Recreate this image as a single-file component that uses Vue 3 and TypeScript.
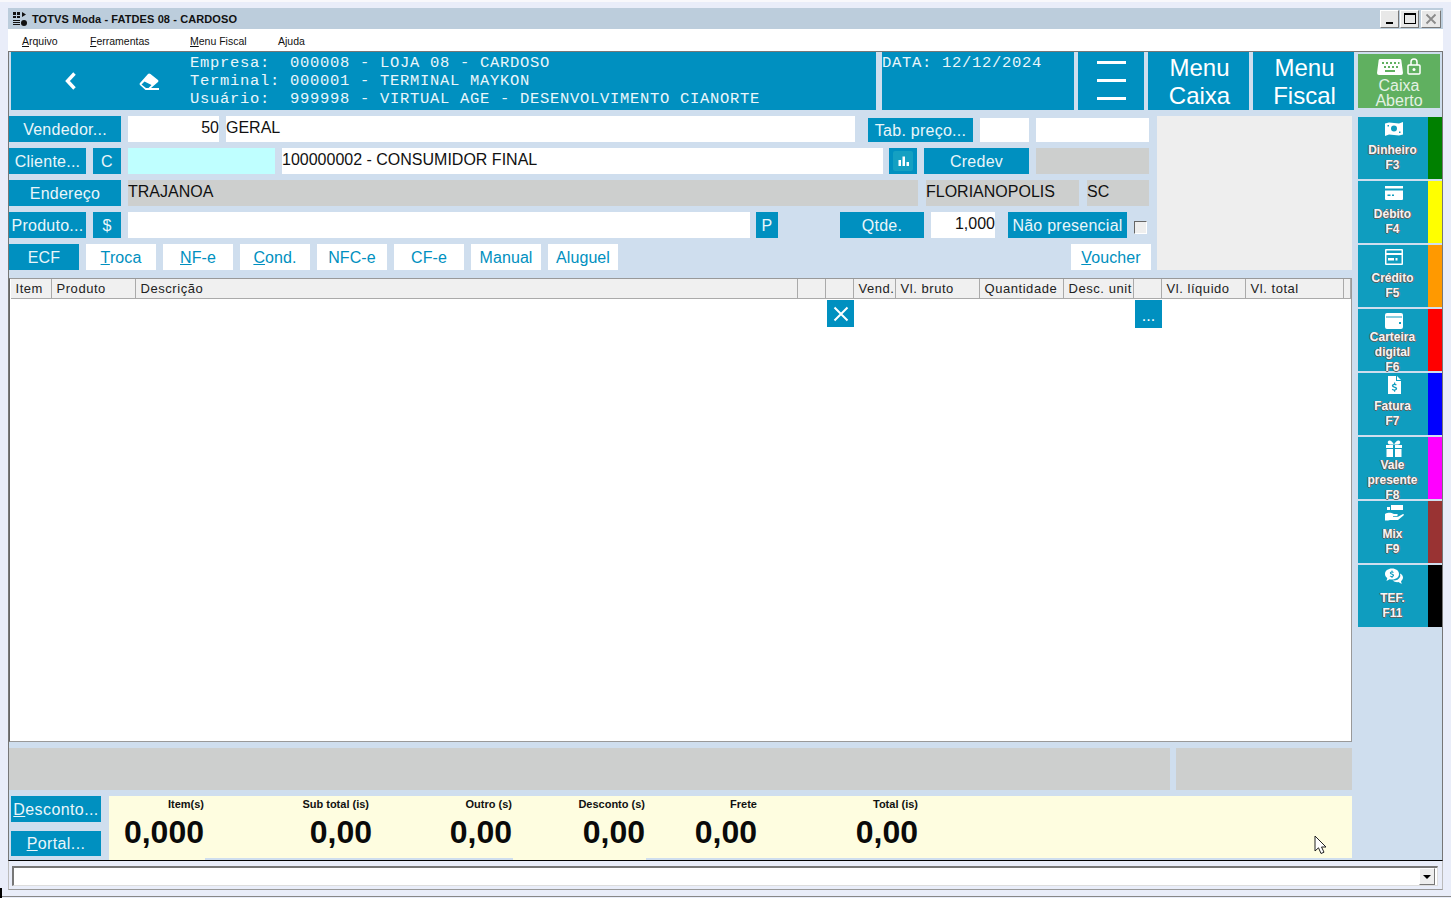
<script setup lang="ts">
interface Field { text?: string; kind: string; w: number; ml?: number; ul?: string; rest?: string; align?: string; short?: boolean; }
const rows: Field[][] = [
  [
    { text: 'Vendedor...', kind: 'btn', w: 112 },
    { text: '50', kind: 'input', w: 91, ml: 7, align: 'right' },
    { text: 'GERAL', kind: 'input', w: 629, ml: 7 },
    { text: 'Tab. preço...', kind: 'btn', w: 105, ml: 13, short: true },
    { kind: 'input', w: 49, ml: 7, short: true },
    { kind: 'input', w: 113, ml: 7, short: true },
  ],
  [
    { text: 'Cliente...', kind: 'btn', w: 77 },
    { text: 'C', kind: 'btn', w: 28, ml: 7 },
    { kind: 'cyan', w: 147, ml: 7 },
    { text: '100000002 - CONSUMIDOR FINAL', kind: 'input', w: 601, ml: 7 },
    { kind: 'chart', w: 28, ml: 6 },
    { text: 'Credev', kind: 'btn', w: 105, ml: 7 },
    { kind: 'gray', w: 113, ml: 7 },
  ],
  [
    { text: 'Endereço', kind: 'btn', w: 112 },
    { text: 'TRAJANOA', kind: 'gray', w: 790, ml: 7 },
    { text: 'FLORIANOPOLIS', kind: 'gray', w: 153, ml: 8 },
    { text: 'SC', kind: 'gray', w: 62, ml: 8 },
  ],
  [
    { text: 'Produto...', kind: 'btn', w: 77 },
    { text: '$', kind: 'btn', w: 28, ml: 7 },
    { kind: 'input', w: 622, ml: 7 },
    { text: 'P', kind: 'btn', w: 22, ml: 6 },
    { text: 'Qtde.', kind: 'btn', w: 84, ml: 62 },
    { text: '1,000', kind: 'input', w: 64, ml: 7, align: 'right' },
    { text: 'Não presencial', kind: 'btn', w: 119, ml: 13 },
    { kind: 'check', w: 13, ml: 7 },
  ],
  [
    { text: 'ECF', kind: 'btn', w: 70 },
    { ul: 'T', rest: 'roca', kind: 'tab', w: 70, ml: 7 },
    { ul: 'N', rest: 'F-e', kind: 'tab', w: 70, ml: 7 },
    { ul: 'C', rest: 'ond.', kind: 'tab', w: 70, ml: 7 },
    { text: 'NFC-e', kind: 'tab', w: 70, ml: 7 },
    { text: 'CF-e', kind: 'tab', w: 70, ml: 7 },
    { text: 'Manual', kind: 'tab', w: 70, ml: 7 },
    { text: 'Aluguel', kind: 'tab', w: 70, ml: 7 },
    { ul: 'V', rest: 'oucher', kind: 'tab', w: 80, ml: 453 },
  ],
];

const columns = [
  { t: 'Item', w: 41 }, { t: 'Produto', w: 84 }, { t: 'Descrição', w: 662 }, { t: '', w: 28 },
  { t: '', w: 28 }, { t: 'Vend.', w: 42 }, { t: 'Vl. bruto', w: 84 }, { t: 'Quantidade', w: 84 },
  { t: 'Desc. unit', w: 70 }, { t: '', w: 28 }, { t: 'Vl. líquido', w: 84 }, { t: 'Vl. total', w: 98 }, { t: '', w: 7 },
];
const gridCols = columns.map((c) => c.w + 'px').join(' ');

const sideButtons = [
  { lines: ['Dinheiro', 'F3'], color: '#008000', d: 'M1 4.500 5 3.500 15 4.500 19 3v12.500l-4 1-10-1-4 1.500zM10 6.600a3 3 0 1 0 0 6 3 3 0 0 0 0-6zM3.500 6v1.500H5V6zM15 12.500V14h1.500v-1.500z' },
  { lines: ['Débito', 'F4'], color: '#ffff00', d: 'M1 3h18v2.500H1zM1 7.500h18V16a1 1 0 0 1-1 1H2a1 1 0 0 1-1-1zM3.500 11.500V13h3v-1.500zM8 11.500V13h2v-1.500z' },
  { lines: ['Crédito', 'F5'], color: '#ff9900', d: 'M2 2h16a1 1 0 0 1 1 1v14a1 1 0 0 1-1 1H2a1 1 0 0 1-1-1V3a1 1 0 0 1 1-1zM2.500 3.500v2.500h15V3.500zM2.500 8v8.500h15V8zM4 11h6v2.500H4zM11.500 11h2v2.500h-2z' },
  { lines: ['Carteira', 'digital', 'F6'], color: '#ff0000', d: 'M3 2h14a2 2 0 0 1 2 2v12a2 2 0 0 1-2 2H3a2 2 0 0 1-2-2V4a2 2 0 0 1 2-2zM2 5.500V6.500h16V5.500zM15 11v2h2v-2z' },
  { lines: ['Fatura', 'F7'], color: '#0000ff', d: 'M4 1h8v5h5v13H4zM13 1l4 4h-4zM10 7.500v1.200q-2.200.3-2.200 2 0 1.600 2.900 2.200 1 .3 1 .8 0 .8-1.300.8-1.200 0-2-.7l-.6 1q.8.7 2.200.9v1.100h1.200v-1.200q2-.4 2-2 0-1.600-2.800-2.200-1.100-.3-1.100-.8 0-.7 1.100-.7 1 0 1.700.5l.6-1q-.7-.5-1.500-.7V7.500z' },
  { lines: ['Vale', 'presente', 'F8'], color: '#ff00ff', d: 'M2 6h7v3H2zM11 6h7v3h-7zM2.500 10H9v8H2.500zM11 10h6.500v8H11zM10 5.500C8 2 6.500 1 5 1.500 3 2.300 3.500 5.500 6 5.500zM10 5.500c2-3.500 3.500-4.500 5-4 2 .8 1.500 4-1 4z' },
  { lines: ['Mix', 'F9'], color: '#993333', d: 'M7 2h12v5H7zM1 11c4-2 6-1 9 0h3c1 0 1 1.500 0 2H9v.7h5l5-2.700c1-.3 1 .8.500 1.500L14 17H6l-2 .5H1zM3 4h3v3H3z' },
  { lines: ['TEF.', 'F11'], color: '#000000', d: 'M8 1.500c4 0 7 2.300 7 5.500s-3 5.500-7 5.500q-1.300 0-2.300-.3L2.500 14l.8-3C1.800 10 1 8.600 1 7c0-3.200 3-5.500 7-5.500zM16 6.500c2 1 3 2.500 3 4 0 1.500-.8 2.800-2 3.600l.7 3-3.300-2q-3.500.4-5.900-1.600 5.500.5 7.500-3.500.5-1 0-3.500zM7.500 3.500v1q-1.700.2-1.700 1.500 0 1.200 2.200 1.700.8.200.8.600 0 .6-1 .6t-1.600-.5l-.5.800q.6.500 1.800.7v1h1v-1q1.600-.3 1.600-1.600 0-1.200-2.200-1.700-.900-.2-.900-.6 0-.500.900-.500.8 0 1.300.4l.5-.8q-.5-.400-1.200-.500v-1z' },
];

const totals = [
  { label: 'Item(s)', value: '0,000', w: 95 },
  { label: 'Sub total (is)', value: '0,00', w: 168, inset: true },
  { label: 'Outro (s)', value: '0,00', w: 140 },
  { label: 'Desconto (s)', value: '0,00', w: 133 },
  { label: 'Frete', value: '0,00', w: 112 },
  { label: 'Total (is)', value: '0,00', w: 161 },
];
const totalCols = totals.map((c) => c.w + 'px').join(' ');
</script>

<template>
  <div class="screen">
    <div class="titlebar">
      <svg class="appicon" width="16" height="16" viewBox="0 0 16 16">
        <path d="M1 1h3v3H1zM5 1h3v3H5zM10 1l4 2.500L10 6zM1 5h3v2H1zM5 5h3v2H5zM1 9h7v1H1zM1 11h7v1H1zM1 13h7v1H1z" fill="#111" />
        <circle cx="12" cy="12" r="3" fill="#111" />
      </svg>
      <span class="title">TOTVS Moda - FATDES 08 - CARDOSO</span>
      <div class="winbtns">
        <div class="winbtn"><i class="min"></i></div>
        <div class="winbtn"><i class="max"></i></div>
        <div class="winbtn close">
          <svg width="12" height="12" viewBox="0 0 12 12"><path d="M1.500 1.500l9 9M10.500 1.500l-9 9" stroke="#8a8a8a" stroke-width="1.800" /></svg>
        </div>
      </div>
    </div>
    <div class="menubar">
      <span class="m1"><u>A</u>rquivo</span>
      <span class="m2"><u>F</u>erramentas</span>
      <span class="m3"><u>M</u>enu Fiscal</span>
      <span class="m4">A<u>j</u>uda</span>
    </div>

    <div class="main">
      <header class="header">
        <div class="infobar">
          <div class="navicon back">
            <svg width="14" height="20" viewBox="0 0 14 20"><path d="M10.500 2.500 3.500 10l7 7.500" fill="none" stroke="#fff" stroke-width="3.400" /></svg>
          </div>
          <div class="navicon eraser">
            <svg width="21" height="19" viewBox="0 0 21 19"><path fill="#fff" fill-rule="evenodd" d="M9 2Q10 1 11.500 2L19 8Q20 9 19 10L12 16H20V18H6.500L1 13Q0 12 1 11ZM5.500 9.500 2.500 12.500 7 16H9.500L12.500 13Z" /></svg>
          </div>
          <pre class="info">Empresa:  000008 - LOJA 08 - CARDOSO
Terminal: 000001 - TERMINAL MAYKON
Usuário:  999998 - VIRTUAL AGE - DESENVOLVIMENTO CIANORTE</pre>
        </div>
        <div class="datebar">DATA: 12/12/2024</div>
        <div class="hamburger"><i></i><i></i><i></i></div>
        <div class="bigbtn caixa">Menu<br />Caixa</div>
        <div class="bigbtn fiscal">Menu<br />Fiscal</div>
        <div class="green">
          <div class="greenicons">
            <svg width="26" height="16" viewBox="0 0 26 16">
              <path fill="#fff" fill-rule="evenodd" d="M3 0h20q1 0 1.300 1L26 14q0 2-2 2H2q-2 0-2-2L1.700 1Q2 0 3 0zM5 3v2h2V3zM9 3v2h2V3zM13 3v2h2V3zM17 3v2h2V3zM21 3v2h1.500V3zM7 7v2h2V7zM11 7v2h2V7zM15 7v2h2V7zM19 7v2h2V7zM8 11v2h10v-2z" />
            </svg>
            <svg width="14" height="17" viewBox="0 0 14 17">
              <path fill="none" stroke="#fff" stroke-width="1.500" d="M4 7V4a3 3 0 0 1 6 0v3M2 7h10a1 1 0 0 1 1 1v7a1 1 0 0 1-1 1H2a1 1 0 0 1-1-1V8a1 1 0 0 1 1-1z" />
              <circle cx="7" cy="11.500" r="1.500" fill="#fff" />
            </svg>
          </div>
          <div class="greentext">Caixa<br />Aberto</div>
        </div>
      </header>

      <div class="content">
        <div class="left">
          <div class="formarea">
            <div class="rows">
              <div v-for="(row, i) in rows" :key="i" class="row">
                <div
                  v-for="(f, j) in row"
                  :key="j"
                  class="field"
                  :class="[f.kind, { short: f.short, right: f.align === 'right' }]"
                  :style="{ width: f.w + 'px', marginLeft: (f.ml ?? 0) + 'px' }"
                >
                  <svg v-if="f.kind === 'chart'" class="charticon" width="22" height="22" viewBox="0 0 22 22">
                    <rect x="1" y="1" width="20" height="20" rx="2" fill="#14a0c2" />
                    <path d="M6.500 10h2.500v6H6.500zM10.500 6.500H13V16h-2.500zM14.500 12H17v4h-2.500z" fill="#fff" />
                  </svg>
                  <template v-else-if="f.ul"><u>{{ f.ul }}</u>{{ f.rest }}</template>
                  <template v-else>{{ f.text }}</template>
                </div>
              </div>
            </div>
            <div class="sidepanel"></div>
          </div>

          <div class="table">
            <div class="thead" :style="{ gridTemplateColumns: gridCols }">
              <div v-for="(c, i) in columns" :key="i" class="th">{{ c.t }}</div>
            </div>
            <div class="tbody" :style="{ gridTemplateColumns: gridCols }">
              <button class="cellbtn xbtn">
                <svg width="16" height="16" viewBox="0 0 16 16"><path d="M1.500 1.500l13 13M14.500 1.500l-13 13" stroke="#fff" stroke-width="2" /></svg>
              </button>
              <button class="cellbtn dots">...</button>
            </div>
          </div>

          <div class="strip">
            <div class="strip-a"></div>
            <div class="strip-b"></div>
          </div>

          <div class="bottom">
            <div class="bottombtns">
              <div class="field btn b1"><u>D</u>esconto...</div>
              <div class="field btn b2"><u>P</u>ortal...</div>
            </div>
            <div class="ycol">
              <div class="ybody" :style="{ gridTemplateColumns: totalCols }">
                <div v-for="t in totals" :key="t.label" class="total">
                  <div class="tlabel" :class="{ inset: t.inset }">{{ t.label }}</div>
                  <div class="tvalue">{{ t.value }}</div>
                </div>
              </div>
              <div class="ytabs"><i class="y1"></i><i class="y2"></i></div>
            </div>
          </div>
        </div>

        <aside class="side">
          <div v-for="s in sideButtons" :key="s.lines[0]" class="sidebtn">
            <div class="sidemain">
              <svg class="sideicon" width="20" height="20" viewBox="0 0 20 20"><path :d="s.d" fill="#fff" fill-rule="evenodd" /></svg>
              <div class="sidetext"><div v-for="l in s.lines" :key="l">{{ l }}</div></div>
            </div>
            <div class="sidecolor" :style="{ background: s.color }"></div>
          </div>
        </aside>
      </div>
    </div>

    <div class="status">
      <div class="combo">
        <div class="combobtn"><i></i></div>
      </div>
    </div>

    <svg class="cursor" width="14" height="20" viewBox="0 0 14 20">
      <path d="M1 1v15l3.500-3.200L7 18.500l3-1.300-2.500-5.200H12z" fill="#fff" stroke="#222" stroke-width="1" />
    </svg>
    <div class="corner"></div>
    <div class="outerline"></div>
  </div>
</template>

<style>
html, body { margin: 0; background: #e9edf9; }
</style>

<style scoped>
.screen {
  position: relative;
  width: 1451px;
  height: 898px;
  box-sizing: border-box;
  padding: 8px 8px 0;
  overflow: hidden;
  background: #e9edf9;
  font-family: "Liberation Sans", Arial, sans-serif;
  color: #000;
  box-shadow: inset 0 2px #f8f8fb;
}
.titlebar {
  height: 21px;
  background: #bccddc;
  display: flex;
  align-items: center;
  position: relative;
  width: 1435px;
}
.appicon { margin: 0 0 0 4px; }
.title {
  margin-left: 4px;
  font-size: 11px;
  font-weight: 700;
  letter-spacing: 0.1px;
  color: #111;
}
.winbtns { margin-left: auto; margin-right: 2px; display: flex; gap: 1px; }
.winbtn {
  width: 19px;
  height: 18px;
  box-sizing: border-box;
  background: #e8e8e8;
  border: 1px solid;
  border-color: #fff #777 #777 #fff;
  position: relative;
  display: flex;
  align-items: center;
  justify-content: center;
}
.winbtn.close { margin-left: 1px; width: 20px; }
.min { position: absolute; left: 5px; bottom: 3px; width: 7px; height: 2px; background: #000; }
.max { width: 10px; height: 8px; border: 1px solid #000; border-top-width: 2px; display: block; }
.menubar {
  height: 22px;
  background: #fff;
  display: flex;
  align-items: center;
  font-size: 10.5px;
  position: relative;
  color: #111;
  width: 1435px;
}
.menubar span { position: absolute; top: 6px; line-height: 13px; }
.m1 { left: 14px; }
.m2 { left: 82px; }
.m3 { left: 182px; }
.m4 { left: 270px; }
.main {
  box-sizing: border-box;
  height: 810px;
  width: 1435px;
  background: #cfdeee;
  border: 1px solid #777;
  border-bottom: 1px solid #000;
  display: flex;
  flex-direction: column;
}
.header { height: 58px; display: flex; padding-left: 2px; color: #fff; }
.infobar {
  width: 865px;
  background: #0090c0;
  display: flex;
  align-items: stretch;
  position: relative;
}
.navicon { display: flex; align-items: center; justify-content: center; }
.back { width: 120px; margin-left: 0; }
.eraser { width: 38px; margin-left: -1px; padding-top: 1px; }
.info {
  margin: 0 0 0 22px;
  font-family: "Liberation Mono", "Courier New", monospace;
  font-size: 15.5px;
  letter-spacing: 0.7px;
  line-height: 18px;
  color: #e9f6fb;
  padding-top: 2px;
}
.datebar {
  width: 192px;
  margin-left: 6px;
  background: #0090c0;
  font-family: "Liberation Mono", "Courier New", monospace;
  font-size: 15.5px;
  letter-spacing: 0.7px;
  line-height: 18px;
  color: #e9f6fb;
  padding: 2px 0 0;
  box-sizing: border-box;
}
.hamburger {
  width: 66px;
  margin-left: 4px;
  background: #0090c0;
  display: flex;
  flex-direction: column;
  align-items: center;
  justify-content: center;
  gap: 15px;
  padding-bottom: 1px;
  box-sizing: border-box;
}
.hamburger i { display: block; width: 29px; height: 3px; background: #fff; }
.bigbtn {
  width: 101px;
  margin-left: 4px;
  background: #0090c0;
  font-size: 24px;
  line-height: 28px;
  text-align: center;
  padding: 2px 0 0 2px;
  box-sizing: border-box;
}
.green {
  width: 82px;
  margin: 2px 0 2px 4px;
  background: #60b060;
  color: #e4f2e4;
  display: flex;
  flex-direction: column;
  align-items: center;
}
.greenicons { display: flex; align-items: flex-end; gap: 4px; margin-top: 3px; height: 18px; }
.greentext { font-size: 16px; line-height: 15px; text-align: center; margin-top: 3px; }
.content { display: flex; margin-top: 6px; flex: 1; min-height: 0; }
.left { width: 1343px; display: flex; flex-direction: column; }
.formarea { display: flex; height: 154px; }
.rows { width: 1148px; display: flex; flex-direction: column; gap: 6px; }
.row { display: flex; height: 26px; }
.field {
  box-sizing: border-box;
  height: 26px;
  font-size: 16px;
  white-space: nowrap;
  flex: none;
  overflow: hidden;
}
.short { height: 24px; margin-top: 2px; }
.btn {
  background: #0090c0;
  color: #eaf6fa;
  text-align: center;
  line-height: 28px;
  letter-spacing: 0.25px;
}
.btn.short { line-height: 25px; }
.tab {
  background: #fff;
  color: #0090c0;
  text-align: center;
  line-height: 28px;
  letter-spacing: 0.1px;
}
.input { background: #fff; line-height: 23px; color: #111; }
.input.right { text-align: right; }
.gray { background: #cdcfce; line-height: 23px; color: #111; }
.cyan { background: #bfffff; }
.chart { background: #0090c0; display: flex; align-items: center; justify-content: center; }
.check {
  height: 13px;
  margin-top: 9px;
  background: #eee;
  border: 1px solid;
  border-color: #666 #fff #fff #666;
}
.sidepanel { width: 195px; background: #eeeeee; }
.table {
  margin-top: 8px;
  height: 464px;
  box-sizing: border-box;
  background: #fff;
  border: 1px solid #999;
  border-left-color: #666;
}
.thead { display: grid; height: 20px; margin-left: 1px; background: #f0f0f0; border-bottom: 1px solid #aaa; box-sizing: border-box; }
.th {
  box-sizing: border-box;
  border-right: 1px solid #aaa;
  padding-left: 4.500px;
  font-size: 13px;
  letter-spacing: 0.55px;
  line-height: 19px;
  color: #222;
  overflow: hidden;
  white-space: nowrap;
}
.tbody { display: grid; margin-left: 1px; padding-top: 1px; align-items: start; }
.cellbtn {
  border: 0;
  padding: 0;
  height: 28px;
  background: #0090c0;
  color: #fff;
  display: flex;
  align-items: center;
  justify-content: center;
  font-family: "Liberation Sans", sans-serif;
}
.xbtn { grid-column: 5; grid-row: 1; width: 27px; height: 27px; margin-left: 1px; }
.dots { grid-column: 10; grid-row: 1; width: 27px; margin-left: 1px; font-size: 16px; padding-top: 4px; }
.strip { margin-top: 6px; height: 42px; display: flex; gap: 6px; }
.strip-a { width: 1161px; background: #cdcfce; }
.strip-b { width: 176px; background: #cdcfce; }
.bottom { margin-top: 6px; display: flex; flex: 1; }
.bottombtns { width: 90px; margin-left: 2px; display: flex; flex-direction: column; }
.b1 { height: 26px; width: 90px; letter-spacing: 0.4px; }
.b2 { height: 25px; width: 90px; margin-top: 9px; line-height: 26px; letter-spacing: 0.4px; }
.ycol { width: 1243px; margin-left: 8px; display: flex; flex-direction: column; }
.ybody { height: 62px; background: #fefde0; display: grid; }
.total { text-align: right; }
.tlabel { font-size: 11px; font-weight: 700; line-height: 14px; margin-top: 1px; color: #111; }
.tlabel.inset { padding-right: 3px; }
.tvalue { font-size: 32px; font-weight: 700; line-height: 36px; margin-top: 3px; color: #0a0a0a; }
.ytabs { display: flex; height: 2px; }
.ytabs i { display: block; background: #fefde0; height: 2px; }
.y1 { width: 96px; }
.y2 { width: 133px; margin-left: 308px; }
.side { margin-left: 6px; width: 84px; display: flex; flex-direction: column; gap: 2px; padding-top: 1px; }
.sidebtn { height: 62px; display: flex; flex: none; }
.sidemain {
  width: 70px;
  background: #0f9dbf;
  display: flex;
  flex-direction: column;
  align-items: center;
  color: #fff;
}
.sideicon { flex: none; margin-top: 2px; margin-left: 1px; }
.sidetext {
  flex: 1;
  display: flex;
  flex-direction: column;
  justify-content: center;
  align-items: center;
  font-size: 12px;
  font-weight: 700;
  line-height: 15px;
  color: #f6f6f6;
  text-shadow: 1px 0 #606060, 0 1px #606060, -1px 0 #606060;
  margin-top: -1px;
  padding: 0 1px 2px 0;
}
.sidecolor { width: 14px; }
.status {
  height: 29px;
  width: 1435px;
  box-sizing: border-box;
  padding: 5px 4px 0;
  border-bottom: 1px solid #999;
  border-right: 1px solid #bbb;
  border-left: 1px solid #bbb;
}
.combo {
  height: 20px;
  background: #fff;
  border: 1px solid;
  border-color: #777 #ddd #ddd #777;
  border-top-width: 2px;
  border-left-width: 2px;
  position: relative;
  box-sizing: border-box;
  width: 1426px;
  margin-left: -1px;
}
.combobtn {
  position: absolute;
  right: 2px;
  top: 0;
  width: 16px;
  height: 17px;
  box-sizing: border-box;
  background: #eee;
  border: 1px solid;
  border-color: #fff #777 #777 #fff;
  display: flex;
  align-items: center;
  justify-content: center;
}
.combobtn i { display: block; width: 0; height: 0; border-left: 4px solid transparent; border-right: 4px solid transparent; border-top: 4px solid #000; }
.cursor { position: absolute; left: 1314px; top: 835px; }
.corner { position: absolute; left: 0; top: 888px; width: 2px; height: 10px; background: #000; }
.outerline { position: absolute; left: 2px; right: 0; top: 896px; height: 1px; background: #888; }
</style>
